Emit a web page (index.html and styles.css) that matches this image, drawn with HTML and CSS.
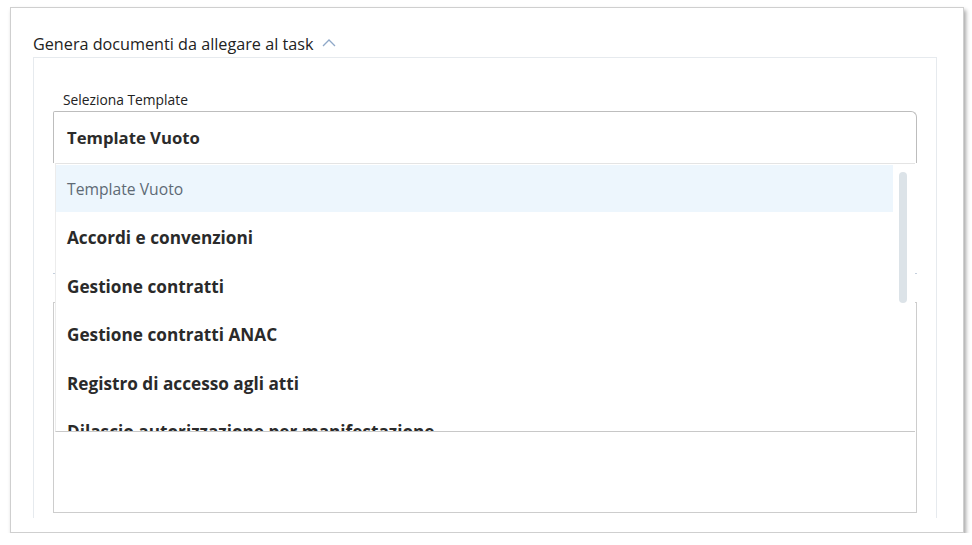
FILE: index.html
```html
<!DOCTYPE html>
<html lang="it">
<head>
<meta charset="utf-8">
<title>Genera documenti</title>
<link rel="stylesheet" href="styles.css">
</head>
<body>
<div class="frame">
  <div class="title">
    <span>Genera documenti da allegare al task</span>
    <svg class="chev" width="16" height="10" viewBox="0 0 16 10"><path d="M2 8 L8 2 L14 8" fill="none" stroke="#8fa8c8" stroke-width="1.3"/></svg>
  </div>
  <div class="panel">
    <div class="label">Seleziona Template</div>
    <div class="field">
      <div class="select">Template Vuoto</div>
      <div class="dropdown">
        <div class="items">
          <div class="item active">Template Vuoto</div>
          <div class="item">Accordi e convenzioni</div>
          <div class="item">Gestione contratti</div>
          <div class="item">Gestione contratti ANAC</div>
          <div class="item">Registro di accesso agli atti</div>
          <div class="item">Dilascio autorizzazione per manifestazione</div>
        </div>
        <div class="track"><div class="thumb"></div></div>
      </div>
    </div>
    <div class="divider"></div>
    <div class="editor"></div>
  </div>
</div>
</body>
</html>
```
FILE: styles.css
```css
html, body {
  margin: 0;
  background: #ffffff;
}
body {
  padding: 7px 0 0 10px;
  font-family: "Open Sans", Lato, sans-serif;
  color: #1f1f1f;
}
.frame {
  box-sizing: border-box;
  width: 954px;
  height: 526px;
  border: 1px solid #cfcfcf;
  box-shadow: 2px 3px 4px rgba(0, 0, 0, 0.35);
  padding: 26px 26px 0 22px;
  overflow: hidden;
  background: #fff;
}
.title {
  display: flex;
  align-items: center;
  gap: 8px;
  height: 20px;
  font-size: 16.2px;
  color: #222;
  margin-bottom: 3px;
}
.chev {
  margin-top: -2px;
}
.panel {
  box-sizing: border-box;
  height: 461px;
  border: 1px solid #e6eaee;
  border-bottom: none;
  padding: 34px 19px 0 19px;
}
.label {
  font-size: 13.8px;
  line-height: 16px;
  padding-left: 10px;
  color: #222;
  margin-bottom: 3px;
}
.field {
  position: relative;
}
.select {
  box-sizing: border-box;
  height: 52px;
  border: 1px solid #bdbdbd;
  border-bottom: none;
  border-radius: 2px 6px 0 0;
  padding-left: 13px;
  display: flex;
  align-items: center;
  font-size: 16.7px;
  font-weight: 700;
  color: #2b2b2b;
}
.dropdown {
  position: absolute;
  top: 100%;
  left: 2px;
  right: 2px;
  height: 269px;
  box-sizing: border-box;
  background: #fff;
  border-top: 1px solid #e4e4e4;
  border-left: 1px solid #ececec;
  border-bottom: 1px solid #c8c8c8;
  padding-top: 1px;
  display: flex;
  overflow: hidden;
  z-index: 2;
}
.items {
  flex: 1;
  display: flex;
  flex-direction: column;
}
.item {
  flex: none;
  height: 48.5px;
  display: flex;
  align-items: center;
  padding-left: 11px;
  font-size: 17.2px;
  font-weight: 700;
  color: #2a2a2a;
  white-space: nowrap;
}
.item.active {
  height: 47px;
  margin-bottom: 1.5px;
  background: #edf6fd;
  font-weight: 400;
  font-size: 15.7px;
  color: #5e6a75;
}
.track {
  width: 22px;
  flex: none;
  padding: 7px 7px 0 6px;
  box-sizing: border-box;
}
.thumb {
  width: 8px;
  height: 131px;
  border-radius: 4px;
  background: #dce3e8;
}
.divider {
  margin-top: 110px;
  height: 0;
  border-top: 1px solid #c4cfdd;
}
.editor {
  box-sizing: border-box;
  margin-top: 28px;
  height: 211px;
  border: 1px solid #cdcdcd;
}
```
